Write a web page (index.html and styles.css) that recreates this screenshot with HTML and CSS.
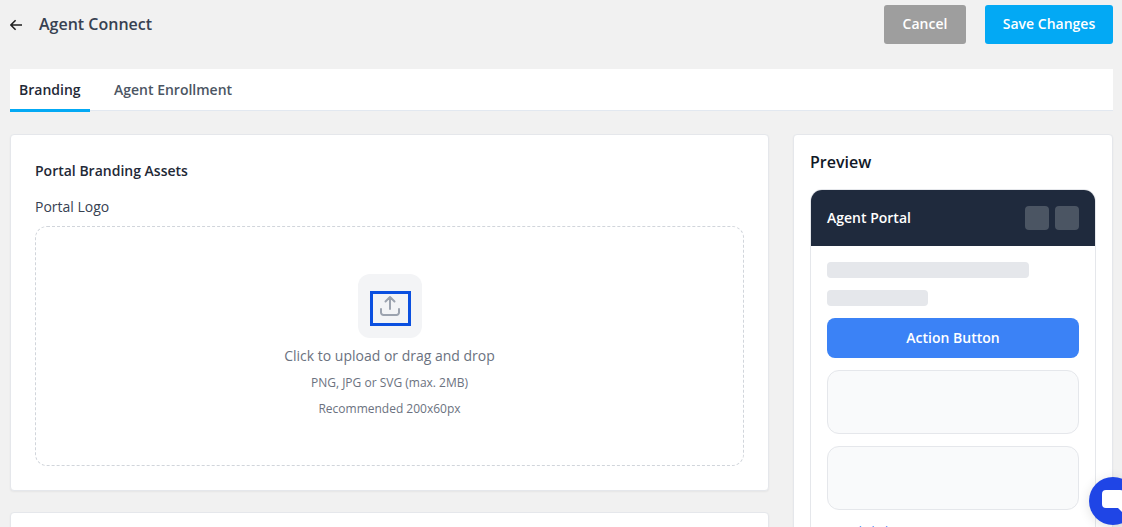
FILE: index.html
```html
<!DOCTYPE html>
<html lang="en">
<head>
<meta charset="utf-8">
<title>Agent Connect</title>
<link rel="stylesheet" href="styles.css">
</head>
<body>
<div class="page">
  <header class="topbar">
    <div class="topbar-left">
      <svg class="back" width="14" height="12" viewBox="0 0 14 12" fill="none" stroke="#1f1f1f" stroke-width="1.6"><path d="M12 6H1M5.600 1.200 0.800 6 5.600 10.800"/></svg>
      <h1 class="title">Agent Connect</h1>
    </div>
    <div class="actions">
      <button class="btn btn-cancel">Cancel</button>
      <button class="btn btn-save">Save Changes</button>
    </div>
  </header>
  <nav class="tabs">
    <div class="tab tab-active">Branding</div>
    <div class="tab">Agent Enrollment</div>
  </nav>
  <div class="columns">
    <main class="main-col">
      <section class="card">
        <h2 class="card-title">Portal Branding Assets</h2>
        <div class="label">Portal Logo</div>
        <div class="dropzone">
          <div class="upload-tile">
            <svg width="24" height="24" viewBox="0 0 24 24" fill="none" stroke="#9ca3af" stroke-width="2" stroke-linecap="round" stroke-linejoin="round"><path d="M3 15v3.500A2.500 2.500 0 0 0 5.500 21h13a2.500 2.500 0 0 0 2.500-2.500V15M12 15V3M7.500 7.500 12 3l4.500 4.500"/></svg>
            <div class="focus-box"></div>
          </div>
          <div class="drop-main">Click to upload or drag and drop</div>
          <div class="drop-sub drop-sub-first">PNG, JPG or SVG (max. 2MB)</div>
          <div class="drop-sub">Recommended 200x60px</div>
        </div>
      </section>
      <section class="card card-next"></section>
    </main>
    <aside class="preview">
      <h2 class="preview-title">Preview</h2>
      <div class="portal">
        <div class="portal-head">
          <span class="portal-name">Agent Portal</span>
          <div class="portal-icons"><span class="square"></span><span class="square"></span></div>
        </div>
        <div class="portal-body">
          <div class="skel skel-long"></div>
          <div class="skel skel-short"></div>
          <div class="action">Action Button</div>
          <div class="tile"></div>
          <div class="tile"></div>
          <a class="sample-link">Sample link</a>
        </div>
      </div>
    </aside>
  </div>
</div>
<div class="chat">
  <svg width="24" height="24" viewBox="0 0 24 24"><path fill="#fff" d="M5 1h14a4 4 0 0 1 4 4v10a4 4 0 0 1-2 3.500V23l-4-4H5a4 4 0 0 1-4-4V5a4 4 0 0 1 4-4z"/></svg>
</div>
</body>
</html>
```
FILE: styles.css
```css
* { box-sizing: border-box; }
html, body { margin: 0; height: 100%; overflow: hidden; }
body { background: #f1f1f1; font-family: "Open Sans", sans-serif; color: #1f2937; }
.page { padding: 5px 9px 0 10px; }
.topbar { display: flex; justify-content: space-between; align-items: center; height: 39px; }
.topbar-left { display: flex; align-items: center; gap: 15px; }
.back { display: block; }
.title { margin: 0 0 2px; font-size: 16px; font-weight: 600; line-height: 24px; color: #374151; }
.actions { display: flex; gap: 19px; }
.btn { height: 39px; border: 0; border-radius: 3px; color: #fff; font: 600 14px/20px "Open Sans", sans-serif; padding: 0 0 2px; }
.btn-cancel { width: 82px; background: #9e9e9e; }
.btn-save { width: 128px; background: #03a9f4; }
.tabs { display: flex; height: 42px; margin-top: 25px; background: #fff; border-bottom: 1px solid #e2e8f0; }
.tab { height: 43px; padding: 0 9px; margin-right: 15px; font-size: 14px; font-weight: 600; line-height: 41px; color: #4b5563; }
.tab-active { width: 80px; margin-right: 15px; color: #1f2937; border-bottom: 3px solid #03a9f4; }
.columns { display: flex; gap: 24px; margin-top: 23px; align-items: flex-start; }
.main-col { width: 759px; display: flex; flex-direction: column; gap: 21px; }
.card { background: #fff; border: 1px solid #e5e7eb; border-radius: 4px; padding: 24px; height: 357px; box-shadow: 0 1px 2px rgba(0,0,0,.05); }
.card-next { height: 200px; }
.card-title { margin: 0; font-size: 14px; font-weight: 600; line-height: 24px; color: #1f2937; }
.label { margin-top: 14px; font-size: 14px; line-height: 20px; color: #374151; }
.dropzone { margin-top: 9px; height: 240px; border: 1px dashed #d1d5db; border-radius: 12px; display: flex; flex-direction: column; align-items: center; padding-top: 47px; }
.upload-tile { position: relative; width: 64px; height: 64px; border-radius: 12px; background: #f3f4f6; display: flex; align-items: center; justify-content: center; }
.focus-box { position: absolute; left: 12px; top: 17px; width: 41px; height: 35px; border: 3px solid #0b50e0; }
.drop-main { margin-top: 8px; font-size: 14px; line-height: 20px; color: #6b7280; }
.drop-sub { margin-top: 6px; font-size: 12px; line-height: 20px; color: #6b7280; }
.drop-sub-first { margin-top: 7px; }
.preview { width: 320px; height: 600px; background: #fff; border: 1px solid #e5e7eb; border-radius: 4px; padding: 15px 16px 16px; box-shadow: 0 1px 2px rgba(0,0,0,.05); }
.preview-title { margin: 0; font-size: 16px; font-weight: 600; line-height: 24px; color: #111827; }
.portal { margin-top: 15px; width: 286px; border: 1px solid #e5e7eb; border-radius: 12px; overflow: hidden; background: #fff; }
.portal-head { height: 57px; margin: -1px -1px 0; padding: 0 17px 0 17px; background: #1f2a3d; display: flex; align-items: center; justify-content: space-between; }
.portal-name { color: #fff; font-size: 14px; font-weight: 600; }
.portal-icons { display: flex; gap: 6px; }
.square { width: 24px; height: 24px; border-radius: 4px; background: #4b5563; }
.portal-body { padding: 16px; display: flex; flex-direction: column; }
.skel { height: 16px; border-radius: 4px; background: #e5e7eb; }
.skel-long { width: 202px; }
.skel-short { width: 101px; margin-top: 12px; }
.action { height: 40px; margin-top: 12px; border-radius: 8px; background: #3b82f6; color: #fff; font-size: 14px; font-weight: 600; line-height: 40px; text-align: center; }
.tile { height: 64px; margin-top: 12px; background: #f9fafb; border: 1px solid #e5e7eb; border-radius: 12px; }
.sample-link { margin-top: 14px; font-size: 12px; line-height: 16px; color: #3b82f6; }
.chat { position: fixed; left: 1089px; top: 477px; width: 48px; height: 48px; border-radius: 50%; background: #1f45e6; display: flex; align-items: center; justify-content: center; box-shadow: 0 2px 12px rgba(0,0,0,.12); }
```
